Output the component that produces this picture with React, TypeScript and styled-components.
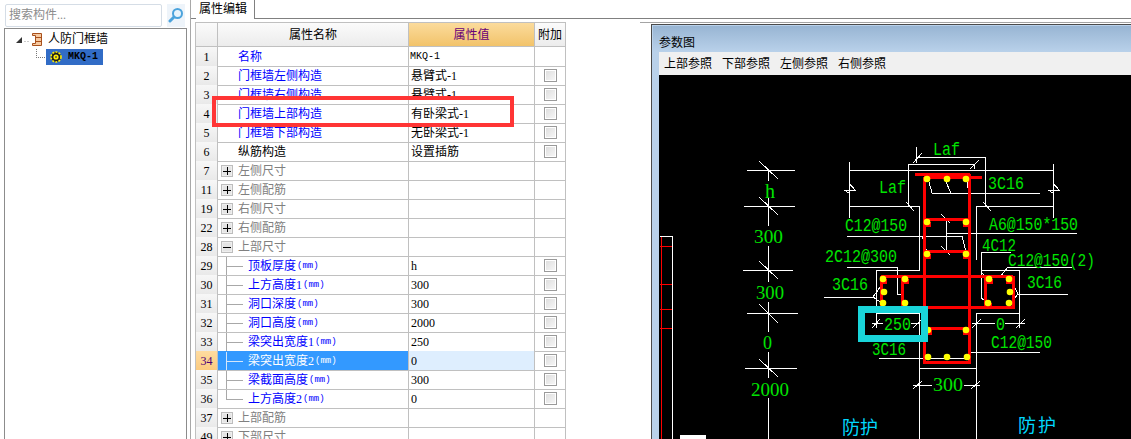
import styled, { createGlobalStyle } from "styled-components";

const GlobalStyle = createGlobalStyle`
  html, body {
    margin: 0;
    padding: 0;
    background: #fff;
  }
  * {
    box-sizing: border-box;
  }
`;

const uiFont = `"Liberation Serif", "Noto Sans CJK SC", serif`;

const Wrapper = styled.div`
  position: relative;
  display: flex;
  width: 1131px;
  height: 439px;
  overflow: hidden;
  background: #fff;
  color: #000;
  font: 12px/18px ${uiFont};
`;

// Left: component search and tree
const Sidebar = styled.aside`
  width: 190px;
  flex-shrink: 0;
  display: flex;
  flex-direction: column;
  padding: 3px 3px 0 4px;
`;

const SearchRow = styled.div`
  display: flex;
  align-items: center;
  height: 24px;
  padding-left: 1px;
  gap: 5px;
`;

const SearchBox = styled.div`
  width: 157px;
  height: 23px;
  padding-left: 3px;
  border: 1px solid #d5dde6;
  border-radius: 2px;
  color: #8c8c8c;
  line-height: 21px;
`;

const SearchButton = styled.div`
  width: 18px;
  height: 23px;
  display: flex;
  align-items: center;
  justify-content: center;
  background: #eef4fa;
`;

const TreePanel = styled.div`
  flex: 1;
  margin-top: 1px;
  padding-top: 1px;
  border: 1px solid #8c8c8c;
  border-bottom: 0;
`;

const TreeRow = styled.div<{ $indent: number }>`
  display: flex;
  align-items: center;
  height: 18px;
  padding-left: ${(p) => p.$indent}px;
`;

const TreeLabel = styled.span`
  margin-left: 6px;
`;

const SelectedNode = styled.div`
  display: flex;
  align-items: center;
  width: 57px;
  height: 16px;
  margin-left: 1px;
  padding-left: 4px;
  background: #316cc6;
  gap: 6px;
`;

const NodeName = styled.span`
  font: bold 10px/16px "Liberation Mono", monospace;
`;

// Right: tab strip and content
const Main = styled.main`
  flex: 1;
  display: flex;
  flex-direction: column;
  border-left: 1px solid #a8a8a8;
`;

const TabBar = styled.div`
  height: 19px;
  flex-shrink: 0;
  padding-left: 5px;
  border-bottom: 1px solid #808080;
`;

const Tab = styled.div`
  width: 59px;
  height: 19px;
  padding-left: 3px;
  background: #fff;
  border-right: 1px solid #808080;
  line-height: 18px;
`;

const Body = styled.div`
  flex: 1;
  min-height: 0;
  display: flex;
  align-items: stretch;
  padding: 3px 0 0 4px;
`;

const PropertyGrid = styled.div`
  width: 371px;
  flex-shrink: 0;
  border-top: 1px solid #c0c0c0;
  border-left: 1px solid #c0c0c0;
`;

const GridRow = styled.div<{ $header?: boolean }>`
  display: grid;
  grid-template-columns: 22px 191px 126px 31px;
  height: ${(p) => (p.$header ? 24 : 19)}px;
`;

const Cell = styled.div`
  display: flex;
  align-items: center;
  min-width: 0;
  padding-top: 1px;
  border-right: 1px solid #c0c0c0;
  border-bottom: 1px solid #c0c0c0;
  white-space: nowrap;
`;

const HeaderCell = styled(Cell)<{ $active?: boolean }>`
  justify-content: center;
  color: ${(p) => (p.$active ? "#680078" : "#000")};
  background: ${(p) =>
    p.$active
      ? "linear-gradient(#fbdb9c, #f2c36a)"
      : "linear-gradient(#fbfbfb, #ececec)"};
`;

const NumberCell = styled(Cell)<{ $selected?: boolean }>`
  justify-content: center;
  color: ${(p) => (p.$selected ? "#4b0078" : "#000")};
  background: ${(p) =>
    p.$selected
      ? "linear-gradient(#ffdca0, #fbcb80)"
      : "linear-gradient(#f7f7f7, #e9e9e9)"};
`;

const NameCell = styled(Cell)<{ $selected?: boolean; $tone: string; $inset: number }>`
  padding-left: ${(p) => p.$inset}px;
  color: ${(p) => (p.$selected ? "#fff" : p.$tone)};
  background: ${(p) => (p.$selected ? "#3399ff" : "transparent")};
`;

const ValueCell = styled(Cell)<{ $selected?: boolean; $mono?: boolean }>`
  padding-left: ${(p) => (p.$mono ? 1 : 2)}px;
  background: ${(p) => (p.$selected ? "#deeefe" : "transparent")};
  ${(p) => p.$mono && `font: 10px/18px "Liberation Mono", monospace;`}
`;

const CheckCell = styled(Cell)`
  justify-content: center;
  padding: 0 0 0 1px;
`;

const CheckBox = styled.span`
  width: 13px;
  height: 13px;
  border: 1px solid #9a9a9a;
  box-shadow: inset 0 0 0 1px #fff;
  background: linear-gradient(135deg, #dcdcdc, #f8f8f8);
`;

const ExpandBox = styled.span`
  width: 12px;
  height: 12px;
  margin-right: 5px;
  display: flex;
  align-items: center;
  justify-content: center;
  border: 1px solid #bdbdbd;
  box-shadow: inset 0 0 0 1px #eee;
  background: #e4e4e4;
`;

const Unit = styled.span`
  margin-left: 1px;
  font: 9px/18px "Liberation Mono", monospace;
`;

const Connector = styled.svg`
  flex-shrink: 0;
  display: block;
  width: 30px;
  height: 18px;
  margin-top: -1px;
`;

// Parameter drawing window
const DialogColumn = styled.div`
  flex: 1;
  min-width: 0;
  display: flex;
  margin-left: 74px;
  padding: 1px 0 0 11px;
  border-top: 1px solid #a4a4a4;
`;

const Dialog = styled.section`
  flex: 1;
  min-width: 0;
  display: flex;
  flex-direction: column;
  padding: 1px 0 0 1px;
  border: 1px solid #4a4a4a;
  border-width: 1px 0 0 1px;
  background: #b9d1ea;
`;

const TitleBar = styled.div`
  height: 26px;
  flex-shrink: 0;
  padding: 8px 0 0 6px;
  background: linear-gradient(#98b5d3, #b9d1ea);
`;

const DialogClient = styled.div`
  flex: 1;
  min-height: 0;
  margin-left: 6px;
  display: flex;
  flex-direction: column;
`;

const Toolbar = styled.div`
  height: 23px;
  flex-shrink: 0;
  display: flex;
  align-items: center;
  gap: 10px;
  padding: 1px 0 0 5px;
  background: #f0f0f0;
`;

const Canvas = styled.div`
  flex: 1;
  min-height: 0;
  overflow: hidden;
  background: #000;
`;

const Drawing = styled.svg`
  display: block;
  width: 472px;
  height: 364px;
`;

const CadText = styled.text<{ $serif?: boolean; $color: string }>`
  fill: ${(p) => p.$color};
  font-family: ${(p) =>
    p.$serif
      ? `"Liberation Serif", serif`
      : `"Liberation Mono", "Noto Sans CJK SC", monospace`};
`;

// Hand-drawn annotations over the screenshot
const RedMark = styled.div`
  position: absolute;
  left: 212px;
  top: 96px;
  width: 302px;
  height: 31px;
  border: 4px solid #ff3535;
`;

const CyanMark = styled.div`
  position: absolute;
  left: 858px;
  top: 306px;
  width: 70px;
  height: 36px;
  border: 7px solid #19d5da;
`;

type RowKind = "prop" | "plain" | "group" | "child";

interface IRow {
  no: number;
  name: string;
  kind: RowKind;
  value?: string;
  check?: boolean;
  open?: boolean;
  unit?: boolean;
  last?: boolean;
  selected?: boolean;
  mono?: boolean;
}

const rows: IRow[] = [
  { no: 1, name: "名称", kind: "prop", value: "MKQ-1", mono: true },
  { no: 2, name: "门框墙左侧构造", kind: "prop", value: "悬臂式-1", check: true },
  { no: 3, name: "门框墙右侧构造", kind: "prop", value: "悬臂式-1", check: true },
  { no: 4, name: "门框墙上部构造", kind: "prop", value: "有卧梁式-1", check: true },
  { no: 5, name: "门框墙下部构造", kind: "prop", value: "无卧梁式-1", check: true },
  { no: 6, name: "纵筋构造", kind: "plain", value: "设置插筋", check: true },
  { no: 7, name: "左侧尺寸", kind: "group" },
  { no: 11, name: "左侧配筋", kind: "group" },
  { no: 19, name: "右侧尺寸", kind: "group" },
  { no: 22, name: "右侧配筋", kind: "group" },
  { no: 28, name: "上部尺寸", kind: "group", open: true },
  { no: 29, name: "顶板厚度", kind: "child", value: "h", check: true, unit: true },
  { no: 30, name: "上方高度1", kind: "child", value: "300", check: true, unit: true },
  { no: 31, name: "洞口深度", kind: "child", value: "300", check: true, unit: true },
  { no: 32, name: "洞口高度", kind: "child", value: "2000", check: true, unit: true },
  { no: 33, name: "梁突出宽度1", kind: "child", value: "250", check: true, unit: true },
  { no: 34, name: "梁突出宽度2", kind: "child", value: "0", check: true, unit: true, selected: true },
  { no: 35, name: "梁截面高度", kind: "child", value: "300", check: true, unit: true },
  { no: 36, name: "上方高度2", kind: "child", value: "0", check: true, unit: true, last: true },
  { no: 37, name: "上部配筋", kind: "group" },
  { no: 49, name: "下部尺寸", kind: "group" },
];

const toolbarItems = ["上部参照", "下部参照", "左侧参照", "右侧参照"];

const whiteLines = [
  // dimension chain on the left
  "M747 170H795M744 206H795M743 270H793M747 313H798M745 368H797",
  "M759 161L778 179M759 197L778 215M759 261L778 279M759 304L778 323M759 359L778 377",
  "M768 170V181M768 198V226M768 246V282M768 302V332M768 352V378M768 398V439",
  // neighbouring wall
  "M660 236H672V439",
  // top dimensions
  "M916 147V163M916 157H985V207M913 163L922 153",
  "M908 207V164H975M974 164V169M970 169L979 160",
  "M849 162V218M1053 164V218M849 170H1053",
  "M849 183L855 190H844L849 193M1053 183L1059 190H1048L1053 193",
  "M849 206H919V270H876V328M906 202L914 211",
  "M1053 206H976V260M983 202L991 211",
  // section leaders
  "M929 182L932 193H1040M946 182L951 193M967 182L969 193",
  "M941 214L950 223M946 218V250M941 246L950 255",
  "M946 233H1077M847 236H962L966 252M922 236L927 252",
  "M847 267H897V294H902",
  "M824 297H873L883 283M873 297L883 304",
  "M981 252H1011M981 252V298L988 303M982 273L986 278",
  "M1000 277L1008 267H1072",
  "M1018 294H1068M1018 294L1012 283M1018 294L1012 302",
  // lower outline
  "M876 313H919V439M976 439V313H1019V270H981",
  "M872 323H883M911 323H920M872 328L880 319M913 328L922 319",
  "M972 323H995M1005 323H1025M972 328L981 319M1016 328L1025 319M1019 313V328",
  "M919 368H976M913 385H932M964 385H980M913 389L922 381M971 389L980 381",
  "M969 352H1040M879 358H968",
];

const redLines =
  "M915 174H970M924 177H982M924 177V362H969V174M924 219H969M924 251H969M881 276H1013M881 276V307H1013V276M902 276V307M985 276V307M924 328H969";

const neighbourRed = "M661 237V439M660 246H672M660 284H672M660 309H672M660 328H672";

// [x, y, has a red nub under the dot]
const dots: [number, number, boolean][] = [
  [927, 179, false], [947, 179, false], [966, 179, false],
  [927, 222, true], [966, 222, true], [927, 254, true], [966, 254, true],
  [883, 279, true], [905, 279, true], [884, 292, false], [883, 303, false], [905, 303, false],
  [989, 279, true], [1009, 279, true], [1010, 292, false], [988, 303, true], [1009, 303, false],
  [928, 330, true], [966, 330, true],
  [928, 357, false], [947, 357, false], [967, 357, false],
];

interface ICadLabel {
  text: string;
  x: number;
  y: number;
  width: number;
  size: number;
  serif?: boolean;
}

const greenLabels: ICadLabel[] = [
  { text: "h", x: 765, y: 198, width: 10, size: 20, serif: true },
  { text: "300", x: 754, y: 243, width: 29, size: 19, serif: true },
  { text: "300", x: 756, y: 299, width: 28, size: 19, serif: true },
  { text: "0", x: 763, y: 349, width: 9, size: 19, serif: true },
  { text: "2000", x: 751, y: 396, width: 38, size: 19, serif: true },
  { text: "Laf", x: 933, y: 155, width: 27, size: 18 },
  { text: "Laf", x: 879, y: 193, width: 27, size: 18 },
  { text: "3C16", x: 988, y: 189, width: 36, size: 18 },
  { text: "C12@150", x: 845, y: 231, width: 62, size: 18 },
  { text: "A6@150*150", x: 989, y: 230, width: 89, size: 18 },
  { text: "4C12", x: 982, y: 251, width: 34, size: 18 },
  { text: "2C12@300", x: 825, y: 262, width: 72, size: 18 },
  { text: "C12@150(2)", x: 1008, y: 266, width: 87, size: 18 },
  { text: "3C16", x: 832, y: 290, width: 36, size: 18 },
  { text: "3C16", x: 1027, y: 288, width: 35, size: 18 },
  { text: "250", x: 884, y: 330, width: 27, size: 18 },
  { text: "0", x: 996, y: 330, width: 9, size: 18 },
  { text: "C12@150", x: 991, y: 348, width: 61, size: 18 },
  { text: "3C16", x: 872, y: 355, width: 34, size: 18 },
  { text: "300", x: 933, y: 391, width: 30, size: 19, serif: true },
];

function SearchIcon() {
  return (
    <svg width="16" height="16" viewBox="0 0 16 16" aria-hidden="true">
      <circle cx="9.5" cy="6.5" r="4.5" fill="#e8f4fc" stroke="#4ba3dc" strokeWidth="2" />
      <path d="M6 10L2 14" stroke="#4ba3dc" strokeWidth="3" strokeLinecap="round" />
    </svg>
  );
}

function WallIcon() {
  return (
    <svg width="11" height="13" viewBox="0 0 11 13" aria-hidden="true">
      <path d="M1.5 .5H10.5V12.5H1.5V10.5H4.5V2.5H1.5Z" fill="#f6c9a0" stroke="#a8501c" />
      <path d="M4.5 4.5H10M4.5 8.5H10" stroke="#a8501c" />
    </svg>
  );
}

function GearIcon() {
  return (
    <svg width="12" height="12" viewBox="0 0 12 12" aria-hidden="true">
      <circle cx="6" cy="6" r="5" fill="#1c1c1c" />
      <circle cx="6" cy="6" r="5" fill="none" stroke="#ffee00" strokeWidth="1.6" strokeDasharray="2 1.2" />
      <circle cx="6" cy="6" r="2.6" fill="#ffee00" />
      <circle cx="6" cy="6" r="1" fill="#555" />
    </svg>
  );
}

function Glyph({ open }: { open?: boolean }) {
  return (
    <svg width="8" height="8" viewBox="0 0 8 8" aria-hidden="true" shapeRendering="crispEdges">
      <path d={open ? "M0 4H8" : "M0 4H8M4 0V8"} stroke="#000" />
    </svg>
  );
}

function PropertyRow({ row }: { row: IRow }) {
  const tone =
    row.kind === "group" ? "#808080" : row.kind === "plain" ? "#000" : "#0000ff";
  const inset = row.kind === "child" ? 0 : row.kind === "group" ? 3 : 20;
  const line = row.selected ? "#d4e6fa" : "#a8a8a8";
  return (
    <GridRow>
      <NumberCell $selected={row.selected}>{row.no}</NumberCell>
      <NameCell $selected={row.selected} $tone={tone} $inset={inset}>
        {row.kind === "group" && (
          <ExpandBox>
            <Glyph open={row.open} />
          </ExpandBox>
        )}
        {row.kind === "child" && (
          <Connector viewBox="0 0 30 18" aria-hidden="true" shapeRendering="crispEdges">
            <path d={row.last ? "M8 0V9H25" : "M8 0V18M8 9H25"} stroke={line} fill="none" />
          </Connector>
        )}
        {row.name}
        {row.unit && <Unit>(mm)</Unit>}
      </NameCell>
      <ValueCell $selected={row.selected} $mono={row.mono}>
        {row.value}
      </ValueCell>
      <CheckCell>{row.check && <CheckBox />}</CheckCell>
    </GridRow>
  );
}

function ParameterDrawing() {
  return (
    <Drawing viewBox="659 75 472 364" aria-label="参数图">
      <g fill="none" stroke="#fff" shapeRendering="crispEdges">
        {whiteLines.map((d) => (
          <path key={d} d={d} />
        ))}
      </g>
      <rect x="680" y="435" width="26" height="4" fill="#fff" />
      <path d={neighbourRed} fill="none" stroke="#ff0000" shapeRendering="crispEdges" />
      <path d={redLines} fill="none" stroke="#ff0000" strokeWidth="3" shapeRendering="crispEdges" />
      {dots.map(([x, y, nub]) => (
        <g key={`${x}-${y}`}>
          {nub && <rect x={x - 3} y={y} width="7" height="5" fill="#ff0000" />}
          <circle cx={x} cy={y} r="3.3" fill="#ffff00" />
        </g>
      ))}
      {greenLabels.map((l) => (
        <CadText
          key={`${l.text}-${l.x}`}
          x={l.x}
          y={l.y}
          fontSize={l.size}
          textLength={l.width}
          lengthAdjust="spacingAndGlyphs"
          $serif={l.serif}
          $color="#00e400"
        >
          {l.text}
        </CadText>
      ))}
      <CadText x="842" y="434" fontSize="18" textLength="36" $color="#00d8ff">
        防护
      </CadText>
      <CadText x="1018" y="432" fontSize="18" textLength="38" $color="#00d8ff">
        防护
      </CadText>
    </Drawing>
  );
}

export default function App() {
  return (
    <Wrapper>
      <GlobalStyle />
      <Sidebar>
        <SearchRow>
          <SearchBox>搜索构件...</SearchBox>
          <SearchButton>
            <SearchIcon />
          </SearchButton>
        </SearchRow>
        <TreePanel>
          <TreeRow $indent={10}>
            <svg width="16" height="13" viewBox="0 0 16 13" aria-hidden="true">
              <path d="M1 10L7 4V10Z" fill="#333" />
              <path d="M9.5 8.5H10.5M12.5 8.5H13.5" stroke="#999" />
            </svg>
            <WallIcon />
            <TreeLabel>人防门框墙</TreeLabel>
          </TreeRow>
          <TreeRow $indent={31}>
            <svg width="9" height="16" viewBox="0 0 9 16" aria-hidden="true" shapeRendering="crispEdges">
              <path d="M.5 0V8.5H9" stroke="#777" strokeDasharray="1 1" fill="none" />
            </svg>
            <SelectedNode>
              <GearIcon />
              <NodeName>MKQ-1</NodeName>
            </SelectedNode>
          </TreeRow>
        </TreePanel>
      </Sidebar>

      <Main>
        <TabBar>
          <Tab>属性编辑</Tab>
        </TabBar>
        <Body>
          <PropertyGrid>
            <GridRow $header>
              <HeaderCell />
              <HeaderCell>属性名称</HeaderCell>
              <HeaderCell $active>属性值</HeaderCell>
              <HeaderCell>附加</HeaderCell>
            </GridRow>
            {rows.map((row) => (
              <PropertyRow key={row.no} row={row} />
            ))}
          </PropertyGrid>
          <DialogColumn>
            <Dialog>
              <TitleBar>参数图</TitleBar>
              <DialogClient>
                <Toolbar>
                  {toolbarItems.map((item) => (
                    <span key={item}>{item}</span>
                  ))}
                </Toolbar>
                <Canvas>
                  <ParameterDrawing />
                </Canvas>
              </DialogClient>
            </Dialog>
          </DialogColumn>
        </Body>
      </Main>

      <RedMark />
      <CyanMark />
    </Wrapper>
  );
}
